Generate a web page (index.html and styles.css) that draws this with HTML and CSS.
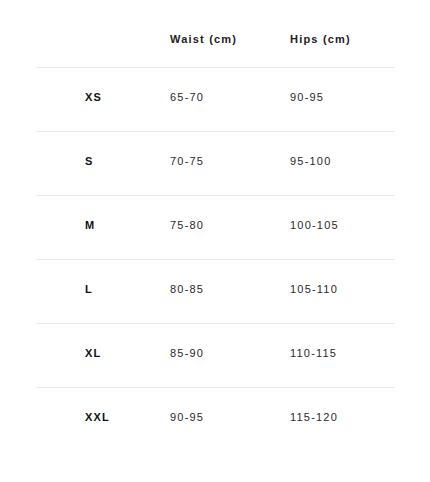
FILE: index.html
```html
<!DOCTYPE html>
<html>
<head>
<meta charset="utf-8">
<link rel="stylesheet" href="styles.css">
</head>
<body>
<table class="size-table">
  <colgroup>
    <col class="col-size">
    <col class="col-waist">
    <col class="col-hips">
  </colgroup>
  <thead>
    <tr>
      <th></th>
      <th>Waist (cm)</th>
      <th>Hips (cm)</th>
    </tr>
  </thead>
  <tbody>
    <tr><td class="size">XS</td><td>65-70</td><td>90-95</td></tr>
    <tr><td class="size">S</td><td>70-75</td><td>95-100</td></tr>
    <tr><td class="size">M</td><td>75-80</td><td>100-105</td></tr>
    <tr><td class="size">L</td><td>80-85</td><td>105-110</td></tr>
    <tr><td class="size">XL</td><td>85-90</td><td>110-115</td></tr>
    <tr><td class="size">XXL</td><td>90-95</td><td>115-120</td></tr>
  </tbody>
</table>
</body>
</html>
```

FILE: styles.css
```css
html, body {
  margin: 0;
  padding: 0;
  background: #fff;
}
body {
  padding: 8px 36px 0 36px;
  font-family: "Liberation Sans", Arial, sans-serif;
  font-size: 11px;
  letter-spacing: 1.2px;
  color: #333;
}
.size-table {
  width: 358px;
  border-collapse: collapse;
  table-layout: fixed;
}
.col-size { width: 134px; }
.col-waist { width: 120px; }
.col-hips { width: 104px; }
th {
  text-align: left;
  font-weight: bold;
  color: #222;
  line-height: 16px;
  padding: 23px 0 20px 0;
  border-bottom: 1px solid #e8e8e8;
}
td {
  line-height: 16px;
  padding: 21px 0 26px 0;
  border-bottom: 1px solid #e8e8e8;
  color: #2a2a2a;
}
tbody tr:last-child td {
  border-bottom: none;
}
td.size {
  padding-left: 49px;
  font-weight: bold;
  color: #111;
}
```
